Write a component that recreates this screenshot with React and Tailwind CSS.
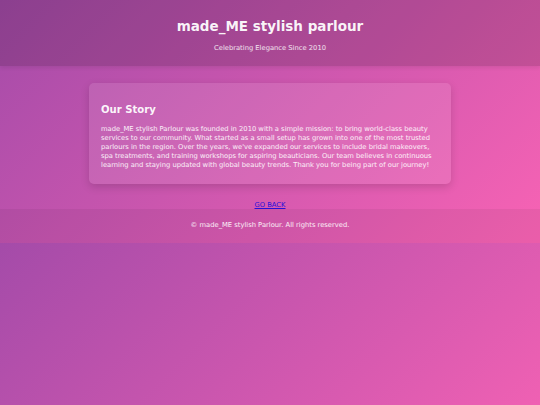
export default function App() {
  return (
    <div className="h-screen bg-[linear-gradient(135deg,#a44ba9,#f863b4)] bg-[length:100%_243px] bg-repeat font-['DejaVu_Sans',sans-serif] text-white">
      <header className="bg-black/15 shadow-[0_2px_4px_rgba(0,0,0,0.08)] pt-[17px] pb-[13px] text-center">
        <h1 className="text-[13.5px] leading-[18px] font-bold text-white/95">made_ME stylish parlour</h1>
        <p className="mt-[9px] text-[6.75px] leading-[9px] text-white/85">Celebrating Elegance Since 2010</p>
      </header>

      <main className="flex flex-col items-center pt-[17px]">
        <section className="w-[362px] rounded-[5px] bg-white/10 shadow-[0_3px_8px_rgba(0,0,0,0.15)] px-[12px] pt-[21px] pb-[14px]">
          <h2 className="text-[10.1px] leading-[12px] font-bold text-white/95">Our Story</h2>
          <p className="mt-[8.5px] text-[6.75px] leading-[9.1px] text-white/90">
            made_ME stylish Parlour was founded in 2010 with a simple mission: to bring world-class beauty
            services to our community. What started as a small setup has grown into one of the most trusted
            parlours in the region. Over the years, we've expanded our services to include bridal makeovers,
            spa treatments, and training workshops for aspiring beauticians. Our team believes in continuous
            learning and staying updated with global beauty trends. Thank you for being part of our journey!
          </p>
        </section>

        <a href="#" className="mt-[17px] text-[6.75px] leading-[8px] text-[#2a10d8] underline">GO BACK</a>
      </main>

      <footer className="bg-black/5 py-[12.5px] text-center">
        <p className="text-[6.75px] leading-[9px] text-white/90">© made_ME stylish Parlour. All rights reserved.</p>
      </footer>
    </div>
  )
}
